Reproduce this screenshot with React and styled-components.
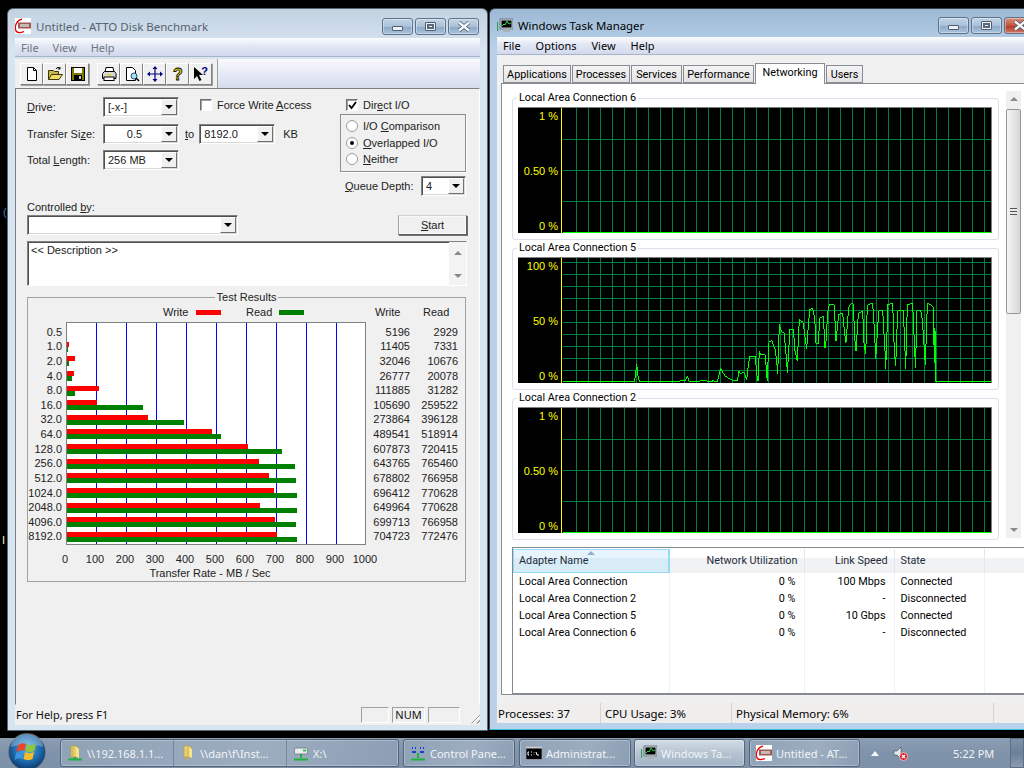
import React from 'react'
import styled, { createGlobalStyle } from 'styled-components'

const Global = createGlobalStyle`
  html, body { margin: 0; padding: 0; background: #000; overflow: hidden; }
  * { box-sizing: border-box; }
  #root { width: 1024px; height: 768px; }
`

const ATTO_FONT = `"Liberation Sans", Arial, sans-serif`
const TM_FONT = `"Noto Sans", "Open Sans", sans-serif`
const PAGE_FONT = `Roboto, "Noto Sans", sans-serif`

const results = [
  ['0.5', 5196, 2929], ['1.0', 11405, 7331], ['2.0', 32046, 10676], ['4.0', 26777, 20078],
  ['8.0', 111885, 31282], ['16.0', 105690, 259522], ['32.0', 273864, 396128], ['64.0', 489541, 518914],
  ['128.0', 607873, 720415], ['256.0', 643765, 765460], ['512.0', 678802, 766958], ['1024.0', 696412, 770628],
  ['2048.0', 649964, 770628], ['4096.0', 699713, 766958], ['8192.0', 704723, 772476],
]
const ticks = [0, 100, 200, 300, 400, 500, 600, 700, 800, 900, 1000]
const adapters = [
  ['Local Area Connection', '0 %', '100 Mbps', 'Connected'],
  ['Local Area Connection 2', '0 %', '-', 'Disconnected'],
  ['Local Area Connection 5', '0 %', '10 Gbps', 'Connected'],
  ['Local Area Connection 6', '0 %', '-', 'Disconnected'],
]
const barWidth = v => Math.max(0, Math.floor(v * 0.3 / 1000) - 1)

const traffic = '-231,273 -17,273 -14,255 -10,219 -6,255 -2,270 2,273 120,273 120,270 135,270 142,256 148,273 180,273 180,270 200,270 205,273 215,273 220,267 226,273 232,273 236,258 242,230 248,245 256,255 268,263 280,270 292,270 297,240 302,250 308,245 314,247 320,268 326,213 330,196 346,196 350,248 354,270 358,180 362,192 376,192 380,250 382,270 386,155 395,147 405,175 410,210 413,248 418,100 424,122 432,125 440,210 442,245 450,115 460,115 465,180 472,210 478,85 490,95 494,130 500,175 506,90 510,55 518,52 524,80 528,155 534,160 540,80 550,76 555,170 558,150 563,65 568,40 582,40 584,70 588,150 596,70 608,66 614,130 618,155 626,50 632,38 640,38 644,140 648,180 655,68 668,60 672,155 677,190 682,45 690,38 698,38 704,130 707,205 716,60 728,58 735,180 737,235 744,40 758,38 763,180 767,225 773,60 790,58 795,180 797,235 802,40 818,38 824,180 827,230 830,60 840,58 845,68 850,130 856,222 862,38 872,40 880,50 883,215 885,112 886,273 1053,273'

const Desktop = styled.div`
  width: 1024px;
  height: 768px;
  background: #000;
  display: flex;
  flex-direction: column;
  overflow: hidden;
  position: relative;
`
const Windows = styled.div`
  flex: 1;
  position: relative;
`
const Speck = styled.span`
  position: absolute;
  left: ${p => p.$x}px;
  top: ${p => p.$y}px;
  color: ${p => p.$c};
  font: 11px ${ATTO_FONT};
`

/* window chrome */
const Win = styled.div`
  position: absolute;
  left: ${p => p.$x}px;
  top: 8px;
  width: ${p => p.$w}px;
  height: ${p => p.$h}px;
  display: flex;
  flex-direction: column;
  padding: 0 7px ${p => p.$pb}px;
  border-radius: 6px 6px 0 0;
  border: 1px solid ${p => p.$active ? '#39424c' : '#5b6670'};
  border-bottom-color: ${p => p.$active ? '#37c6dc' : '#5b6670'};
  background: ${p => p.$active
    ? 'linear-gradient(#9cb8d4, #b9d1ea 40px)'
    : 'linear-gradient(#c2d2e1, #d7e4f2 40px)'};
`
const Title = styled.div`
  height: ${p => p.$h}px;
  flex: none;
  display: flex;
  align-items: center;
  gap: 5px;
  font: ${p => p.$size}px ${TM_FONT};
  color: ${p => p.$active ? '#000' : '#56626e'};
  padding-top: 5px;
`
const TitleText = styled.span`
  flex: 1;
`
const CaptionGroup = styled.div`
  display: flex;
  gap: 2px;
  align-self: flex-start;
  margin: ${p => p.$m};
`
const Caption = styled.div`
  width: 31px;
  height: 17px;
  border: 1px solid #5f7288;
  border-radius: 3px;
  display: flex;
  align-items: center;
  justify-content: center;
  box-shadow: inset 0 0 0 1px rgba(255,255,255,.35);
  background: ${p => p.$close
    ? 'linear-gradient(#d98f7d, #c4553e 50%, #b23c27 55%, #cf7a66)'
    : 'linear-gradient(#c2d4e6, #a9c1d9 50%, #8faac6 55%, #a9c3dd)'};
`
const MinGlyph = styled.span`
  width: 11px;
  height: 5px;
  margin-top: 4px;
  background: #eef2f6;
  border: 1px solid #4f5d6e;
  border-radius: 1px;
`
const MaxGlyph = styled.span`
  width: 11px;
  height: 9px;
  background: #eef2f6;
  border: 1px solid #4f5d6e;
  border-radius: 1px;
  box-shadow: inset 0 0 0 1px #eef2f6, inset 0 0 0 3px #5a6a7c;
`
const CloseGlyph = () => (
  <svg width="14" height="11" viewBox="0 0 14 11">
    <path d="M2 1.5 L12 9.5 M12 1.5 L2 9.5" stroke="#4f5d6e" strokeWidth="4" />
    <path d="M2 1.5 L12 9.5 M12 1.5 L2 9.5" stroke="#f3f5f7" strokeWidth="2.4" />
  </svg>
)
const Captions = ({ margin, closeRed }) => (
  <CaptionGroup $m={margin}>
    <Caption><MinGlyph /></Caption>
    <Caption><MaxGlyph /></Caption>
    <Caption $close={closeRed}><CloseGlyph /></Caption>
  </CaptionGroup>
)
const MenuBar = styled.div`
  height: ${p => p.$h}px;
  flex: none;
  display: flex;
  align-items: center;
  background: linear-gradient(#fbfcfe, #e3e7f4 45%, #d3d9ee);
  border-bottom: 1px solid #a9b4c4;
  font: 11px ${TM_FONT};
  color: ${p => p.$color};
`
const MenuItem = styled.span`
  margin-left: ${p => p.$ml}px;
`

/* ATTO */
const ToolStrip = styled.div`
  height: 29px;
  flex: none;
  margin-top: 2px;
  display: flex;
  background: linear-gradient(#f8f9fd, #d6dcef);
`
const ToolGroup = styled.div`
  width: 203px;
  background: #f0f0f0;
  border-right: 1px solid #a0a0a0;
  display: flex;
  padding: 4px 0 0 5px;
`
const ToolBtn = styled.div`
  width: 23px;
  height: 22px;
  margin-left: ${p => p.$gap || 0}px;
  display: flex;
  align-items: center;
  justify-content: center;
  background: #f0f0f0;
  border: 1px solid;
  border-color: #fff #808080 #808080 #fff;
  box-shadow: 1px 1px 0 #a0a0a0;
`
const AttoClient = styled.div`
  flex: 1;
  min-height: 0;
  background: #f0f0f0;
  border: 1px solid;
  border-color: #808080 #fff #f0f0f0 #808080;
  padding: 8px 12px 0 11px;
  font: 11px ${ATTO_FONT};
  color: #222;
`
const TopSection = styled.div`
  height: 98px;
  display: grid;
  grid-template-columns: 313px 126px;
`
const FormRow = styled.div`
  height: 20px;
  margin-bottom: ${p => p.$mb}px;
  display: flex;
  align-items: center;
`
const FieldLabel = styled.span`
  width: 76px;
  flex: none;
`
const U = styled.span`
  text-decoration: underline;
`
const SelectBox = styled.div`
  width: ${p => p.$w}px;
  height: 20px;
  margin-left: ${p => p.$ml || 0}px;
  flex: none;
  display: flex;
  align-items: center;
  background: #fff;
  border: 1px solid;
  border-color: #808080 #fff #fff #808080;
  box-shadow: inset 1px 1px 0 #505050, inset -1px -1px 0 #d8d8d8;
`
const SelectValue = styled.span`
  flex: 1;
  padding-left: 4px;
  text-align: ${p => p.$center ? 'center' : 'left'};
  color: #222;
`
const DropBtn = styled.span`
  width: 16px;
  height: 16px;
  margin-right: 1px;
  flex: none;
  display: flex;
  align-items: center;
  justify-content: center;
  background: #f0f0f0;
  border: 1px solid;
  border-color: #fff #707070 #707070 #fff;
  &::after {
    content: '';
    border-left: 4px solid transparent;
    border-right: 4px solid transparent;
    border-top: 4px solid #000;
  }
`
const Select = ({ w, ml, center, children }) => (
  <SelectBox $w={w} $ml={ml}>
    <SelectValue $center={center}>{children}</SelectValue>
    <DropBtn />
  </SelectBox>
)
const Small = styled.span`
  margin-left: ${p => p.$ml}px;
`
const CheckBox = styled.span`
  width: 12px;
  height: 12px;
  flex: none;
  background: #fff;
  border: 1px solid;
  border-color: #707070 #fff #fff #707070;
  box-shadow: inset 1px 1px 0 #a0a0a0;
  display: flex;
  align-items: center;
  justify-content: center;
`
const CheckLine = styled.label`
  display: flex;
  align-items: center;
  gap: 5px;
  height: 14px;
  margin: ${p => p.$m};
`
const RadioGroup = styled.div`
  margin-top: 2px;
  height: 58px;
  border: 1px solid #8e8e8e;
  box-shadow: 1px 1px 0 #fff;
  padding: 3px 0 0 5px;
`
const RadioLine = styled.div`
  height: 16.5px;
  display: flex;
  align-items: center;
  gap: 5px;
`
const Radio = styled.span`
  width: 12px;
  height: 12px;
  border-radius: 50%;
  background: #fff;
  border: 1px solid #9a9a9a;
  display: flex;
  align-items: center;
  justify-content: center;
  &::after {
    content: '';
    width: 4px;
    height: 4px;
    border-radius: 50%;
    background: ${p => p.$on ? '#000' : 'transparent'};
  }
`
const QueueRow = styled.div`
  margin-top: 4px;
  display: flex;
  align-items: center;
  padding-left: 5px;
`
const QueueLabel = styled.span`
  width: 76px;
  white-space: nowrap;
`
const ControlledLabel = styled.div`
  margin-top: 5px;
  height: 14px;
  line-height: 14px;
`
const ControlRow = styled.div`
  margin-top: 1px;
  width: 440px;
  display: flex;
  justify-content: space-between;
`
const StartBtn = styled.div`
  width: 69px;
  height: 20px;
  display: flex;
  align-items: center;
  justify-content: center;
  background: #f0f0f0;
  border: 1px solid;
  border-color: #d0d0d0 #606060 #606060 #a0a0a0;
  box-shadow: inset 0 0 0 1px #f8f8f8, 1px 1px 0 #707070;
`
const DescBox = styled.div`
  margin-top: 6px;
  width: 440px;
  height: 45px;
  display: flex;
  background: #fff;
  border: 1px solid;
  border-color: #808080 #fff #fff #808080;
  box-shadow: inset 1px 0 0 #505050, inset 0 1px 0 #505050;
`
const DescText = styled.div`
  flex: 1;
  padding: 2px 3px;
`
const DescScroll = styled.div`
  width: 17px;
  background: #f3f3f3;
  display: flex;
  flex-direction: column;
  justify-content: space-between;
  align-items: center;
  padding: 9px 0 7px;
`
const ScrollArrow = styled.span`
  border-left: 4px solid transparent;
  border-right: 4px solid transparent;
  ${p => p.$up ? 'border-bottom' : 'border-top'}: 4px solid #8a8a8a;
`
const ResultSet = styled.fieldset`
  margin: 3px 0 0;
  padding: 0;
  width: 439px;
  height: 293px;
  min-width: 0;
  border: 1px solid #a2a2a2;
`
const ResultLegend = styled.legend`
  margin: 0 auto;
  padding: 0 2px;
  font-size: 11px;
  line-height: 16px;
`
const LegendRow = styled.div`
  height: 14px;
  line-height: 14px;
  display: flex;
  align-items: center;
  padding-left: 135px;
`
const Swatch = styled.span`
  width: 25px;
  height: 5px;
  margin: 0 ${p => p.$mr}px 0 8px;
  background: ${p => p.$c};
`
const ColHead = styled.span`
  width: ${p => p.$w}px;
`
const ChartRow = styled.div`
  margin-top: 3px;
  height: 223px;
  display: flex;
`
const Column = styled.div`
  width: ${p => p.$w}px;
  padding-top: 2.7px;
  text-align: right;
  padding-right: ${p => p.$pr || 0}px;
`
const NumCell = styled.div`
  height: 14.64px;
  line-height: 14.64px;
`
const Plot = styled.div`
  width: 300px;
  height: 223px;
  padding-top: 1.7px;
  border: 1px solid #808080;
  background: repeating-linear-gradient(90deg, #fff 0 29px, #0000ff 29px 30px) #fff;
`
const BarRow = styled.div`
  height: 14.64px;
  display: flex;
  flex-direction: column;
  justify-content: center;
`
const Bar = styled.div`
  height: 5px;
  background: ${p => p.$c};
`
const AxisRow = styled.div`
  margin: 7px 0 0 22px;
  display: flex;
`
const Tick = styled.span`
  width: 30px;
  text-align: center;
  flex: none;
  line-height: 15px;
`
const AxisTitle = styled.div`
  width: 364px;
  text-align: center;
  line-height: 14px;
  margin-top: -1px;
`
const AttoStatus = styled.div`
  height: 20px;
  flex: none;
  display: flex;
  align-items: center;
  background: #f0f0f0;
  font: 11px ${TM_FONT};
  color: #111;
  padding: 0 0 1px 1px;
`
const StatusText = styled.span`
  flex: 1;
`
const StatusPane = styled.span`
  width: ${p => p.$w}px;
  height: 16px;
  margin-right: 3px;
  border: 1px solid;
  border-color: #a0a0a0 #fff #fff #a0a0a0;
  text-align: center;
  line-height: 14px;
`
const Grip = styled.span`
  width: 12px;
  height: 12px;
  margin: 6px 0 0 5px;
  background: repeating-linear-gradient(135deg, transparent 0 2px, #9a9a9a 2px 3px, #fff 3px 4px);
  clip-path: polygon(100% 0, 100% 100%, 0 100%);
`

/* task manager */
const TmBody = styled.div`
  flex: 1;
  min-height: 0;
  background: #f0f0f0;
  display: flex;
  flex-direction: column;
  padding: 0 0 8px 4px;
`
const TabStrip = styled.div`
  height: 28px;
  flex: none;
  display: flex;
  align-items: flex-end;
  padding-left: 2px;
  gap: 1px;
  position: relative;
  z-index: 1;
`
const Tab = styled.div`
  width: ${p => p.$w}px;
  height: ${p => p.$on ? 21 : 18}px;
  margin-bottom: ${p => p.$on ? -1 : 0}px;
  border: 1px solid #898c95;
  border-bottom: ${p => p.$on ? 'none' : '1px solid #898c95'};
  background: ${p => p.$on ? '#fff' : 'linear-gradient(#f4f4f4, #e3e3e3)'};
  font: 10.8px ${PAGE_FONT};
  line-height: 18px;
  text-align: center;
  color: #000;
  white-space: nowrap;
`
const Page = styled.div`
  flex: 1;
  min-height: 0;
  background: #fff;
  border: 1px solid #898c95;
  padding: 6px 0 0 10px;
  font: 10.8px ${PAGE_FONT};
  color: #000;
`
const GraphArea = styled.div`
  display: flex;
  align-items: flex-start;
`
const GraphStack = styled.div`
  width: 487px;
`
const GraphSet = styled.fieldset`
  margin: 0;
  padding: 1px 6px 0 5px;
  height: 150px;
  min-width: 0;
  border: 1px solid #d9e0ea;
  border-radius: 3px;
`
const GraphLegend = styled.legend`
  margin-left: -1px;
  padding: 0 2px;
  line-height: 16px;
  font-size: 10.8px;
`
const GraphBox = styled.div`
  height: 126px;
  display: flex;
  background: #000;
  border-top: 1px solid #808080;
  border-right: 1px solid #808080;
`
const GraphScale = styled.div`
  width: 44px;
  flex: none;
  border-right: 1px solid #ffff00;
  display: flex;
  flex-direction: column;
  justify-content: space-between;
  text-align: right;
  padding: 1px 3px 0 0;
  color: #ffff00;
  font: 11px ${ATTO_FONT};
  line-height: 14px;
`
const GraphPlot = styled.svg`
  display: block;
  margin-left: 1px;
`
const VScroll = styled.div`
  width: 15px;
  height: 447px;
  margin: 1px 0 0 7px;
  background: #f0f0f0;
  display: flex;
  flex-direction: column;
  align-items: center;
`
const VScrollEnd = styled.div`
  height: 16px;
  flex: none;
  display: flex;
  align-items: center;
  justify-content: center;
`
const VThumb = styled.div`
  width: 15px;
  height: 205px;
  margin-top: 2px;
  border: 1px solid #979797;
  border-radius: 2px;
  background: linear-gradient(90deg, #f4f4f4, #e6e6e6 50%, #d6d6d6);
  display: flex;
  align-items: center;
  justify-content: center;
`
const ThumbGrip = styled.span`
  width: 7px;
  height: 7px;
  background: repeating-linear-gradient(#555 0 1px, #e8e8e8 1px 3px);
`
const VSpace = styled.div`
  flex: 1;
`
const TableWrap = styled.div`
  margin-top: 7px;
  width: 530px;
  height: 147px;
  border: 1px solid #828790;
  padding-top: 1px;
`
const Table = styled.table`
  width: 100%;
  height: 100%;
  border-collapse: collapse;
  table-layout: fixed;
  font: 10.8px ${PAGE_FONT};
`
const Th = styled.th`
  height: 24px;
  position: relative;
  font-weight: normal;
  padding: 0 6px 1px 6px;
  text-align: ${p => p.$right ? 'right' : 'left'};
  color: #1e2b3a;
  border-right: 1px solid ${p => p.$on ? '#96d9f9' : '#e3e5e8'};
  background: ${p => p.$on
    ? 'linear-gradient(#e7f4fb 0 38%, #d8ecf8 38%)'
    : 'linear-gradient(#fff 0 38%, #f1f2f4 38%)'};
  box-shadow: ${p => p.$on ? 'inset 0 0 0 1px #96d9f9' : 'none'};
`
const SortMark = styled.span`
  position: absolute;
  left: 74px;
  top: 2px;
  border-left: 4px solid transparent;
  border-right: 4px solid transparent;
  border-bottom: 4px solid #8db2d0;
`
const Td = styled.td`
  height: 17px;
  padding: 0 ${p => p.$right ? 8 : 5}px 0 6px;
  text-align: ${p => p.$right ? 'right' : 'left'};
  color: #000;
  border-right: 1px solid #eef3f9;
  white-space: nowrap;
  line-height: 17px;
`
const FillTd = styled.td`
  border-right: 1px solid #eef3f9;
`
const TmStatus = styled.div`
  height: 20px;
  flex: none;
  display: flex;
  align-items: center;
  background: #f0eded;
  font: 11.4px ${TM_FONT};
  color: #000;
`
const TmPane = styled.div`
  width: ${p => p.$w}px;
  height: 100%;
  display: flex;
  align-items: center;
  padding-left: ${p => p.$pl}px;
  border-right: 1px solid #d7d3d3;
`

/* taskbar */
const Taskbar = styled.div`
  height: 30px;
  flex: none;
  display: flex;
  position: relative;
  background: linear-gradient(#8b9db2, #7f93aa 50%, #7c90a8);
  font: 11px ${TM_FONT};
  color: #f1f4f7;
`
const OrbSlot = styled.div`
  width: 60px;
  flex: none;
  position: relative;
`
const Orb = styled.svg`
  position: absolute;
  left: 8px;
  top: -5px;
`
const TaskGroup = styled.div`
  display: flex;
  height: 28px;
  margin: 1px ${p => p.$gap ?? 4}px 0 0;
  border: 1px solid #536579;
  border-radius: 3px;
  box-shadow: inset 0 0 0 1px rgba(255,255,255,.25);
  background: ${p => p.$on
    ? 'linear-gradient(#d3dce5, #b5c3d1 50%, #a4b4c5)'
    : 'linear-gradient(110deg, #90a2b6, #9cadc0 60%, #8c9eb3)'};
`
const TaskItem = styled.div`
  width: ${p => p.$w}px;
  display: flex;
  align-items: center;
  gap: 4px;
  padding-left: 6px;
  white-space: nowrap;
  overflow: hidden;
  border-right: ${p => p.$sep ? '1px solid #75879b' : 'none'};
`
const Tray = styled.div`
  flex: 1;
  display: flex;
  align-items: center;
  padding-left: 7px;
`
const TrayArrow = styled.span`
  border-left: 4px solid transparent;
  border-right: 4px solid transparent;
  border-bottom: 5px solid #f4f6f8;
  margin-right: 13px;
`
const Clock = styled.span`
  margin-left: 45px;
`
const ShowDesktop = styled.div`
  width: 14px;
  height: 30px;
  border: 1px solid #5c6e83;
  background: linear-gradient(#7e91a7, #6c8098 50%, #8a9cb1);
`

/* icons */
const IcoSvg = styled.svg`
  flex: none;
`
const Ico = ({ children }) => (
  <IcoSvg width="16" height="16" viewBox="0 0 16 16">{children}</IcoSvg>
)
const IconNew = () => (
  <Ico><path d="M3.5 1.5h6l3 3v10h-9z" fill="#fff" stroke="#000" /><path d="M9.5 1.5v3h3" fill="none" stroke="#000" /></Ico>
)
const IconOpen = () => (
  <Ico>
    <path d="M1.5 13.5v-9h5l1 1h4v8z" fill="#c6b64c" stroke="#3c3600" />
    <path d="M1.5 13.5l3-5h11l-3.500 5z" fill="#ecdc6c" stroke="#3c3600" />
    <path d="M9 3c1-2 3-2 4-.5M13 1v2h-2" fill="none" stroke="#000" />
  </Ico>
)
const IconSave = () => (
  <Ico>
    <rect x="1.500" y="1.500" width="13" height="13" fill="#7c7800" stroke="#000" />
    <rect x="4" y="2" width="8" height="5" fill="#fff" />
    <rect x="4" y="9" width="8" height="5" fill="#000" />
    <rect x="9" y="10" width="2" height="3" fill="#c8c8c8" />
  </Ico>
)
const IconPrint = () => (
  <Ico>
    <path d="M5 1.500h7l1 5H4z" fill="#fff" stroke="#000" />
    <path d="M1.500 7.500l2-2h10l1.500 2v5h-13.500z" fill="#d8d8d8" stroke="#000" />
    <rect x="3" y="11" width="10" height="3.500" fill="#fff" stroke="#000" />
    <rect x="6" y="8" width="4" height="1.500" fill="#e8d800" />
  </Ico>
)
const IconPreview = () => (
  <Ico>
    <path d="M2.500 1.500h6l3 3v10h-9z" fill="#fff" stroke="#000" />
    <circle cx="10" cy="10" r="3" fill="#a8e0f0" stroke="#205070" />
    <path d="M12 12l3 3" stroke="#000" strokeWidth="1.600" />
  </Ico>
)
const IconMove = () => (
  <Ico>
    <path d="M8 1v14M1 8h14" stroke="#000080" strokeWidth="1.200" />
    <path d="M8 0l2.500 3h-5zM8 16l2.500-3h-5zM0 8l3-2.500v5zM16 8l-3-2.500v5z" fill="#000080" />
  </Ico>
)
const IconHelp = () => (
  <Ico>
    <text x="8" y="14" textAnchor="middle" fontFamily="Liberation Sans" fontWeight="bold" fontSize="16" fill="#e8e000" stroke="#000" strokeWidth=".8">?</text>
  </Ico>
)
const IconHelpArrow = () => (
  <Ico>
    <path d="M1 1v12l3-3 2.500 5 2-1-2.500-5h4z" fill="#000" />
    <text x="11.500" y="9" textAnchor="middle" fontFamily="Liberation Sans" fontWeight="bold" fontSize="11" fill="#000080">?</text>
  </Ico>
)
const IconAtto = () => (
  <Ico>
    <rect width="16" height="16" fill="#fff" />
    <rect x="3" y="4.500" width="13" height="6" fill="#a05a58" />
    <rect x="5" y="6" width="9" height="3" fill="#c9b9b0" />
    <path d="M7 1.200C2 2 -1 8 1 13c1.500 2 5 1.800 8 .5" fill="none" stroke="#e80000" strokeWidth="1.300" />
  </Ico>
)
const IconTaskMgr = () => (
  <Ico>
    <rect x="3" y="1" width="13" height="10" fill="#c8d0d8" stroke="#606870" strokeWidth=".8" />
    <rect x="4.500" y="2.500" width="10" height="7" fill="#000" />
    <path d="M5 8l2-2 1 1 2-4 2 3 2-1" fill="none" stroke="#20e040" />
    <path d="M0.500 4v9" stroke="#30a050" strokeWidth="1.200" />
    <rect x="6" y="11" width="7" height="3" fill="#a8b0b8" />
  </Ico>
)
const IconFolderNet = ({ open }) => (
  <Ico>
    <path d="M4 1h5l2 1v10H4z" fill="#e8cf6a" stroke="#b09a40" strokeWidth=".6" />
    <path d="M9 2l3 2v9l-3-1.500z" fill="#f6e48c" />
    {open && <path d="M6 2v10" stroke="#c8ae50" />}
    {open ? <path d="M1 14.500h14M8 12v2.500" stroke="#20b040" strokeWidth="2" /> : <path d="M4 13l4 2V2" fill="none" stroke="#d0b050" />}
  </Ico>
)
const IconDriveNet = () => (
  <Ico>
    <rect x="1.500" y="3" width="13" height="6" rx="1" fill="#e8ecef" stroke="#606870" strokeWidth=".7" />
    <rect x="10" y="4.500" width="3" height="2" fill="#30c050" />
    <path d="M8 9v4M1 14.500h14" stroke="#20b040" strokeWidth="2" />
  </Ico>
)
const IconControl = () => (
  <Ico>
    <path d="M2 2h4v2H2zM10 2h4v2h-4zM2 6h4v2H2zM10 6h4v2h-4z" fill="#1f3fc8" />
    <path d="M3 3h2M11 3h2" stroke="#fff" />
    <path d="M8 8v5M1 14.500h14" stroke="#20b040" strokeWidth="2" />
  </Ico>
)
const IconConsole = () => (
  <Ico>
    <rect y="1.500" width="16" height="13" fill="#000" stroke="#b8bec6" strokeWidth=".6" />
    <rect y="1.500" width="16" height="2" fill="#c8cdd4" />
    <path d="M3 7H2v3h1M5 7h1M5 10h1M8 7.500v.5M8 9.500v.5M10 7l1 3h2" fill="none" stroke="#fff" />
  </Ico>
)
const IconSpeaker = () => (
  <Ico>
    <path d="M2 6h3l4-4v12l-4-4H2z" fill="#e8eaee" stroke="#505a66" strokeWidth=".7" />
    <circle cx="11.500" cy="11.500" r="4" fill="#d8282c" stroke="#fff" strokeWidth=".6" />
    <path d="M10 10l3 3M13 10l-3 3" stroke="#fff" strokeWidth="1.200" />
  </Ico>
)
const CheckMark = () => (
  <svg width="9" height="9" viewBox="0 0 9 9"><path d="M1 4l2.500 3L8 1" fill="none" stroke="#000" strokeWidth="1.800" /></svg>
)

const NetGraph = ({ labels, rows, line }) => {
  const xs = Array.from({ length: 35 }, (_, i) => 13 + i * 12)
  return (
    <GraphBox>
      <GraphScale>{labels.map(l => <span key={l}>{l}</span>)}</GraphScale>
      <GraphPlot width="428" height="125" viewBox="0 0 428 125" shapeRendering="crispEdges">
        {xs.map(x => <line key={x} x1={x + .5} x2={x + .5} y1="0" y2="125" stroke="#008040" />)}
        {rows.map(y => <line key={y} x1="0" x2="428" y1={y + .5} y2={y + .5} stroke="#008040" />)}
        {line
          ? <polyline points={line} transform="translate(77 33) scale(.33333)" fill="none" stroke="#00ff00" strokeWidth="3" />
          : <line x1="0" x2="428" y1="124.500" y2="124.500" stroke="#00ff00" />}
      </GraphPlot>
    </GraphBox>
  )
}

const App = () => (
  <>
    <Global />
    <Desktop>
      <Windows>
        <Speck $x={3} $y={206} $c="#3a78c8">(</Speck>
        <Speck $x={2} $y={534} $c="#f0f0d0">I</Speck>
        <Win $x={7} $w={481} $h={723} $pb={5}>
          <Title $h={29} $size={11.5}>
            <IconAtto />
            <TitleText>Untitled - ATTO Disk Benchmark</TitleText>
            <Captions margin="4px 1px 0 0" />
          </Title>
          <MenuBar $h={19} $color="#6f7680">
            <MenuItem $ml={6}>File</MenuItem>
            <MenuItem $ml={14}>View</MenuItem>
            <MenuItem $ml={14}>Help</MenuItem>
          </MenuBar>
          <ToolStrip>
            <ToolGroup>
              <ToolBtn><IconNew /></ToolBtn>
              <ToolBtn><IconOpen /></ToolBtn>
              <ToolBtn><IconSave /></ToolBtn>
              <ToolBtn $gap={8}><IconPrint /></ToolBtn>
              <ToolBtn><IconPreview /></ToolBtn>
              <ToolBtn><IconMove /></ToolBtn>
              <ToolBtn><IconHelp /></ToolBtn>
              <ToolBtn><IconHelpArrow /></ToolBtn>
            </ToolGroup>
          </ToolStrip>
          <AttoClient>
            <TopSection>
              <div>
                <FormRow $mb={7}>
                  <FieldLabel><U>D</U>rive:</FieldLabel>
                  <Select w={76}>[-x-]</Select>
                  <CheckLine $m="-5px 0 0 21px">
                    <CheckBox />
                    <span>Force Write <U>A</U>ccess</span>
                  </CheckLine>
                </FormRow>
                <FormRow $mb={6}>
                  <FieldLabel>Transfer Si<U>z</U>e:</FieldLabel>
                  <Select w={76} center>0.5</Select>
                  <Small $ml={6}><U>t</U>o</Small>
                  <Select w={76} ml={5}>8192.0</Select>
                  <Small $ml={8}>KB</Small>
                </FormRow>
                <FormRow $mb={0}>
                  <FieldLabel>Total <U>L</U>ength:</FieldLabel>
                  <Select w={76}>256 MB</Select>
                </FormRow>
              </div>
              <div>
                <CheckLine $m="1px 0 0 6px">
                  <CheckBox><CheckMark /></CheckBox>
                  <span>Dir<U>e</U>ct I/O</span>
                </CheckLine>
                <RadioGroup>
                  <RadioLine><Radio /><span>I/O <U>C</U>omparison</span></RadioLine>
                  <RadioLine><Radio $on /><span><U>O</U>verlapped I/O</span></RadioLine>
                  <RadioLine><Radio /><span><U>N</U>either</span></RadioLine>
                </RadioGroup>
                <QueueRow>
                  <QueueLabel><U>Q</U>ueue Depth:</QueueLabel>
                  <Select w={45}>4</Select>
                </QueueRow>
              </div>
            </TopSection>
            <ControlledLabel>Controlled <U>b</U>y:</ControlledLabel>
            <ControlRow>
              <Select w={211} />
              <StartBtn><span><U>S</U>tart</span></StartBtn>
            </ControlRow>
            <DescBox>
              <DescText>&lt;&lt; Description &gt;&gt;</DescText>
              <DescScroll><ScrollArrow $up /><ScrollArrow /></DescScroll>
            </DescBox>
            <ResultSet>
              <ResultLegend>Test Results</ResultLegend>
              <LegendRow>
                <ColHead $w={25}>Write</ColHead>
                <Swatch $c="#ff0000" $mr={25} />
                <ColHead $w={25}>Read</ColHead>
                <Swatch $c="#008000" $mr={71} />
                <ColHead $w={48}>Write</ColHead>
                <span>Read</span>
              </LegendRow>
              <ChartRow>
                <Column $w={38} $pr={4}>
                  {results.map(r => <NumCell key={r[0]}>{r[0]}</NumCell>)}
                </Column>
                <Plot>
                  {results.map(r => (
                    <BarRow key={r[0]}>
                      <Bar $c="#ff0000" style={{ width: barWidth(r[1]) }} />
                      <Bar $c="#008000" style={{ width: barWidth(r[2]) }} />
                    </BarRow>
                  ))}
                </Plot>
                <Column $w={44}>
                  {results.map(r => <NumCell key={r[0]}>{r[1]}</NumCell>)}
                </Column>
                <Column $w={48}>
                  {results.map(r => <NumCell key={r[0]}>{r[2]}</NumCell>)}
                </Column>
              </ChartRow>
              <AxisRow>
                {ticks.map(t => <Tick key={t}>{t}</Tick>)}
              </AxisRow>
              <AxisTitle>Transfer Rate - MB / Sec</AxisTitle>
            </ResultSet>
          </AttoClient>
          <AttoStatus>
            <StatusText>For Help, press F1</StatusText>
            <StatusPane $w={28} />
            <StatusPane $w={33}>NUM</StatusPane>
            <StatusPane $w={32} />
            <Grip />
          </AttoStatus>
        </Win>

        <Win $x={489} $w={554} $h={722} $pb={6} $active>
          <Title $h={28} $size={11.4} $active>
            <IconTaskMgr />
            <TitleText>Windows Task Manager</TitleText>
            <Captions margin="3px 0 0 0" closeRed />
          </Title>
          <MenuBar $h={18} $color="#000">
            <MenuItem $ml={6}>File</MenuItem>
            <MenuItem $ml={15}>Options</MenuItem>
            <MenuItem $ml={15}>View</MenuItem>
            <MenuItem $ml={15}>Help</MenuItem>
          </MenuBar>
          <TmBody>
            <TabStrip>
              <Tab $w={68}>Applications</Tab>
              <Tab $w={58}>Processes</Tab>
              <Tab $w={51}>Services</Tab>
              <Tab $w={71}>Performance</Tab>
              <Tab $w={70} $on>Networking</Tab>
              <Tab $w={37}>Users</Tab>
            </TabStrip>
            <Page>
              <GraphArea>
                <GraphStack>
                  <GraphSet>
                    <GraphLegend>Local Area Connection 6</GraphLegend>
                    <NetGraph labels={['1 %', '0.50 %', '0 %']} rows={[31, 62, 93]} />
                  </GraphSet>
                  <GraphSet>
                    <GraphLegend>Local Area Connection 5</GraphLegend>
                    <NetGraph labels={['100 %', '50 %', '0 %']} rows={[4, 16, 28, 40, 52, 64, 76, 88, 100, 112]} line={traffic} />
                  </GraphSet>
                  <GraphSet>
                    <GraphLegend>Local Area Connection 2</GraphLegend>
                    <NetGraph labels={['1 %', '0.50 %', '0 %']} rows={[31, 62, 93]} />
                  </GraphSet>
                </GraphStack>
                <VScroll>
                  <VScrollEnd><ScrollArrow $up /></VScrollEnd>
                  <VThumb><ThumbGrip /></VThumb>
                  <VSpace />
                  <VScrollEnd><ScrollArrow /></VScrollEnd>
                </VScroll>
              </GraphArea>
              <TableWrap>
                <Table>
                  <colgroup>
                    <col width="156" />
                    <col width="135" />
                    <col width="90" />
                    <col width="90" />
                    <col />
                  </colgroup>
                  <thead>
                    <tr>
                      <Th $on>Adapter Name<SortMark /></Th>
                      <Th $right>Network Utilization</Th>
                      <Th $right>Link Speed</Th>
                      <Th>State</Th>
                      <Th />
                    </tr>
                  </thead>
                  <tbody>
                    {adapters.map(a => (
                      <tr key={a[0]}>
                        <Td>{a[0]}</Td>
                        <Td $right>{a[1]}</Td>
                        <Td $right>{a[2]}</Td>
                        <Td>{a[3]}</Td>
                        <Td />
                      </tr>
                    ))}
                    <tr>
                      <FillTd /><FillTd /><FillTd /><FillTd /><FillTd />
                    </tr>
                  </tbody>
                </Table>
              </TableWrap>
            </Page>
          </TmBody>
          <TmStatus>
            <TmPane $w={104} $pl={1}>Processes: 37</TmPane>
            <TmPane $w={131} $pl={4}>CPU Usage: 3%</TmPane>
            <TmPane $w={262} $pl={4}>Physical Memory: 6%</TmPane>
          </TmStatus>
        </Win>
      </Windows>

      <Taskbar>
        <OrbSlot>
          <Orb width="38" height="38" viewBox="0 0 38 38">
            <defs>
              <radialGradient id="orbFill" cx="50%" cy="40%" r="60%">
                <stop offset="0" stopColor="#5fb4e6" />
                <stop offset=".6" stopColor="#1f6cae" />
                <stop offset="1" stopColor="#0c3a6e" />
              </radialGradient>
            </defs>
            <circle cx="19" cy="19" r="18" fill="url(#orbFill)" stroke="#3a5068" />
            <path d="M3 14a16 14 0 0 1 32 0c-8-3-24-3-32 0z" fill="#fff" opacity=".28" />
            <path d="M10 12c3-2 6-2 8-1l-1.500 7c-2-1-5-1-8 1z" fill="#e8452c" />
            <path d="M19 11c3 1.500 6 1.500 9 0l-1.500 7c-3 1.500-6 1.500-9 0z" fill="#8cc83c" />
            <path d="M8 20c3-2 6-2 8-1l-1.500 7c-2-1-5-1-8 1z" fill="#3c94e0" />
            <path d="M17 19c3 1.500 6 1.500 9 0l-1.500 7c-3 1.500-6 1.500-9 0z" fill="#f4bc28" />
          </Orb>
        </OrbSlot>
        <TaskGroup>
          <TaskItem $w={113} $sep><IconFolderNet open /><span>\\192.168.1.1...</span></TaskItem>
          <TaskItem $w={113} $sep><IconFolderNet /><span>\\dan\f\Inst...</span></TaskItem>
          <TaskItem $w={111}><IconDriveNet /><span>X:\</span></TaskItem>
        </TaskGroup>
        <TaskGroup>
          <TaskItem $w={110}><IconControl /><span>Control Pane...</span></TaskItem>
        </TaskGroup>
        <TaskGroup $gap={3}>
          <TaskItem $w={110}><IconConsole /><span>Administrat...</span></TaskItem>
        </TaskGroup>
        <TaskGroup $on $gap={4}>
          <TaskItem $w={109}><IconTaskMgr /><span>Windows Ta...</span></TaskItem>
        </TaskGroup>
        <TaskGroup>
          <TaskItem $w={109}><IconAtto /><span>Untitled - AT...</span></TaskItem>
        </TaskGroup>
        <Tray>
          <TrayArrow />
          <IconSpeaker />
          <Clock>5:22 PM</Clock>
        </Tray>
        <ShowDesktop />
      </Taskbar>
    </Desktop>
  </>
)

export default App
